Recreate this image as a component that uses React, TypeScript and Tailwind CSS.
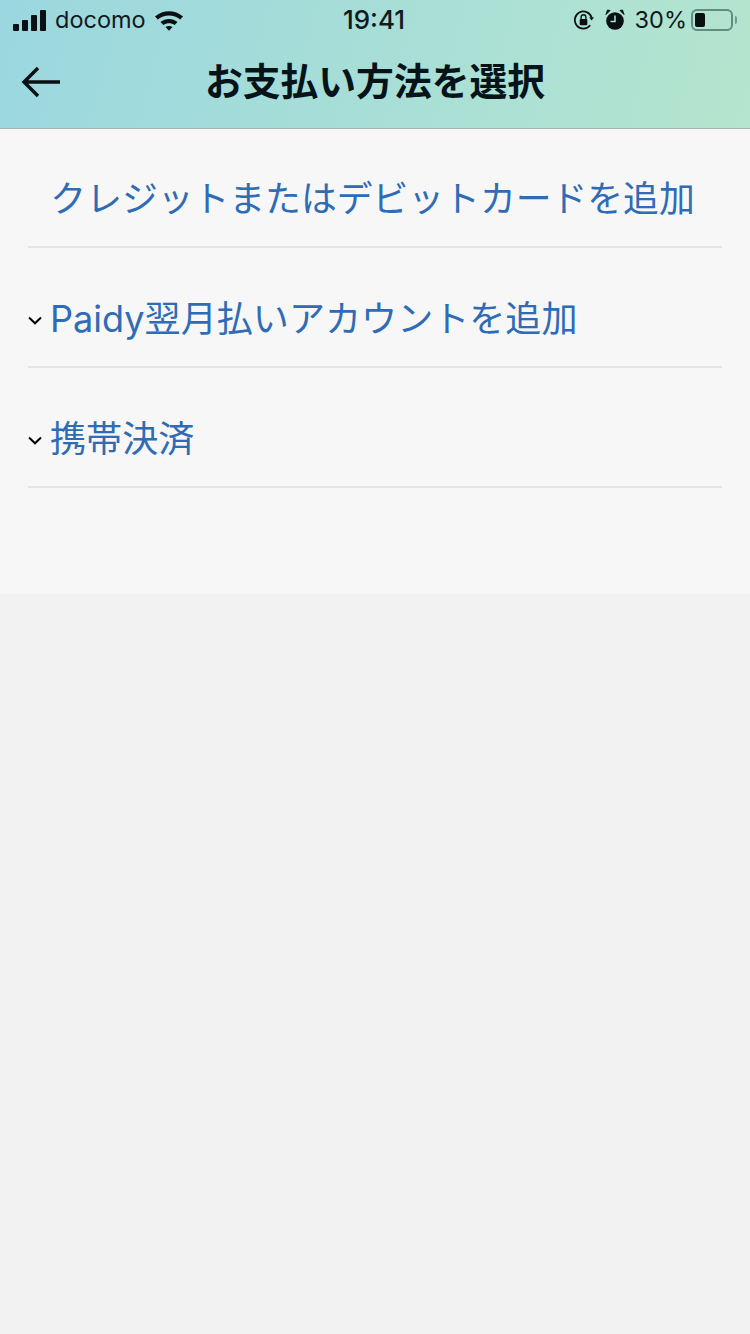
const font = "font-['Inter','Noto_Sans_CJK_JP',sans-serif]";

function StatusBar() {
  return (
    <div className="h-10 pl-[13px] pr-[13px] flex items-center justify-between text-[#111a1e]">
      <div className="flex items-center w-[249px]">
        <div className="flex items-end gap-[3px] h-[21px]">
          <div className="w-[6px] h-[7px] bg-[#0a0f12] rounded-[1px]" />
          <div className="w-[6px] h-[11px] bg-[#0a0f12] rounded-[1px]" />
          <div className="w-[6px] h-[16px] bg-[#0a0f12] rounded-[1px]" />
          <div className="w-[6px] h-[21px] bg-[#0a0f12] rounded-[1px]" />
        </div>
        <span className="ml-[9px] text-[23.5px] leading-none">docomo</span>
        <svg className="ml-[8px]" width="30" height="22" viewBox="0 0 30 22">
          <path d="M1 7.500C9 .5 21 .5 29 7.500l-2.800 3C20 5.200 10 5.200 3.800 10.500z" fill="#0a0f12" />
          <path d="M6.500 13C11.500 9 18.500 9 23.500 13l-2.800 3C17 13.500 13 13.500 9.300 16z" fill="#0a0f12" />
          <path d="M11.500 18c2-1.500 5-1.500 7 0L15 21.700z" fill="#0a0f12" />
        </svg>
      </div>
      <span className="text-[26px] leading-none font-medium">19:41</span>
      <div className="flex items-center justify-end w-[251px]">
        <svg width="21" height="22" viewBox="0 0 22 22" fill="none">
          <path d="M18 16.500A9 9 0 1 1 19.500 8.500" stroke="#0a0f12" strokeWidth="1.800" />
          <path d="M17 8h5l-2.500 3.500z" fill="#0a0f12" />
          <rect x="7" y="10" width="8" height="6.500" rx="1" fill="#0a0f12" />
          <path d="M8.500 10V8a2.500 2.500 0 0 1 5 0v2" stroke="#0a0f12" strokeWidth="1.400" />
        </svg>
        <svg className="ml-[11px]" width="20" height="22" viewBox="0 0 20 22">
          <circle cx="10" cy="12" r="8.800" fill="#0a0f12" />
          <path d="M1 5.500 5 1.500 2.500 1zM19 5.500 15 1.500 17.500 1z" fill="#0a0f12" stroke="#0a0f12" />
          <path d="M10 6.500V12.500H5.500" stroke="#b0e3d3" strokeWidth="1.500" fill="none" />
        </svg>
        <span className="ml-[10px] text-[23.5px] leading-none">30%</span>
        <div className="ml-[4px] w-[42px] h-[22px] border-2 border-[#5f8e80] rounded-[6px] p-[2px]">
          <div className="w-[10px] h-full bg-[#0a0f12] rounded-[2px]" />
        </div>
        <div className="ml-[2px] w-[2px] h-[8px] bg-[#6f9c8e] rounded-r-sm" />
      </div>
    </div>
  );
}

function Chevron() {
  return (
    <svg className="shrink-0 mt-[2px]" width="14" height="9" viewBox="0 0 14 9" fill="none">
      <path d="M1 1.500 7 7.300 13 1.500" stroke="#000" strokeWidth="2" />
    </svg>
  );
}

function Row({ label, chevron, first }: { label: string; chevron?: boolean; first?: boolean }) {
  return (
    <div className={`${first ? 'h-[119px] pr-[5px]' : 'h-[120px]'} mx-7 pt-[25px] border-b-2 border-[#e3e4e4] flex items-center justify-center`}>
      {chevron ? (
        <div className="w-full flex items-center">
          <Chevron />
          <span className="ml-[8px] text-[36.100px] leading-none text-[#2f6cb5]">{label}</span>
        </div>
      ) : (
        <span className="text-[35.800px] leading-none text-[#2f6cb5]">{label}</span>
      )}
    </div>
  );
}

export default function App() {
  return (
    <div className={`${font} w-[750px] h-[1334px] bg-[#f2f2f2] overflow-hidden`}>
      <div className="h-[129px] border-b border-[#a9b4b1] bg-linear-[105deg,#9bd7e0,#b4e5ce]">
        <StatusBar />
        <div className="h-[84px] grid grid-cols-[1fr_auto_1fr] items-center">
          <svg className="ml-[21px]" width="40" height="34" viewBox="0 0 40 34" fill="none">
            <path d="M39 17H3M17 3 3 17 17 31" stroke="#0a0f12" strokeWidth="3.400" />
          </svg>
          <span className="text-[37.800px] font-bold text-[#06141a] leading-none">お支払い方法を選択</span>
        </div>
      </div>
      <div className="h-[465px] bg-[#f7f7f7]">
        <Row label="クレジットまたはデビットカードを追加" first />
        <Row label="Paidy翌月払いアカウントを追加" chevron />
        <Row label="携帯決済" chevron />
      </div>
    </div>
  );
}
